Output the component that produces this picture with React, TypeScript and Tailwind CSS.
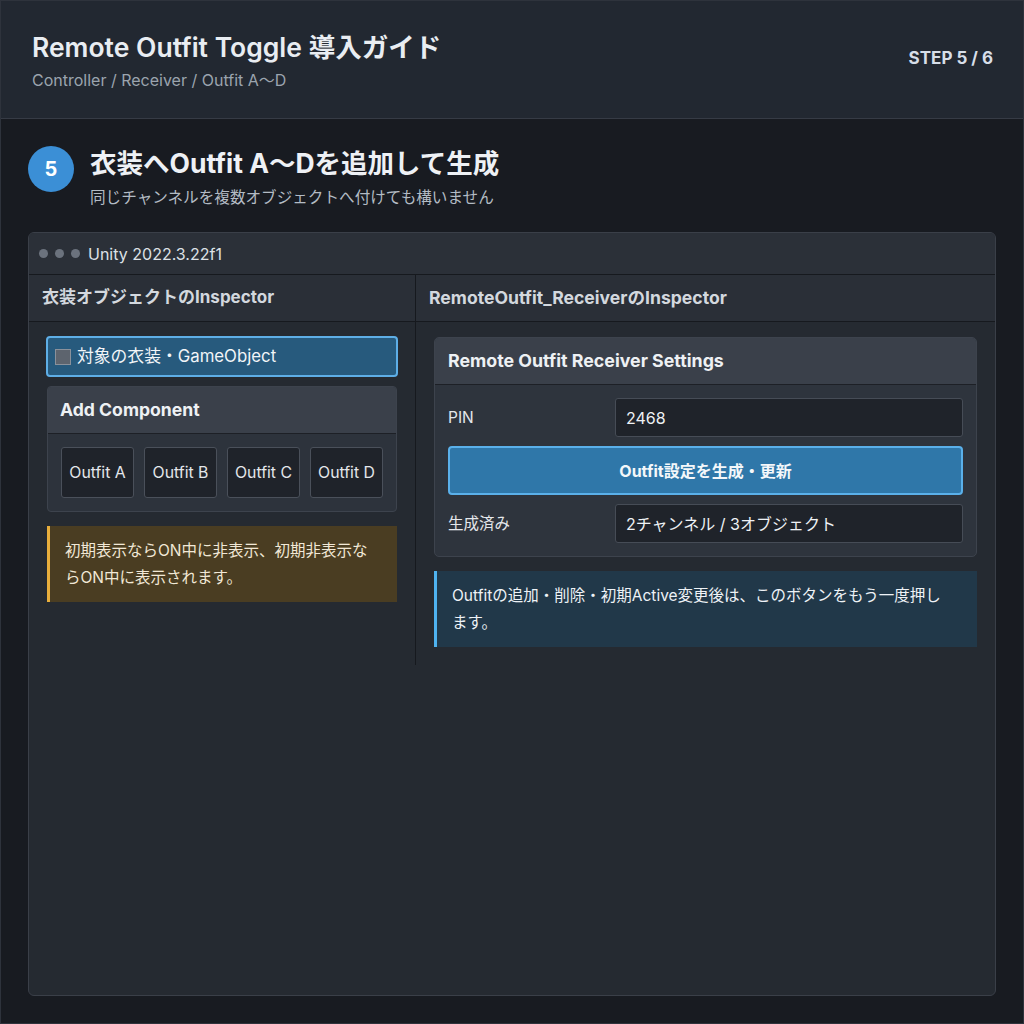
import React from "react";

const font = { fontFamily: '"Inter", "Noto Sans CJK JP", "Noto Sans", sans-serif' };

function OutfitButton({ label }: { label: string }) {
  return (
    <div className="flex h-[51px] w-[73px] items-center justify-center rounded-[3px] border border-[#4a505a] bg-[#1f232a] text-[15.8px] text-[#e4e7eb]">
      {label}
    </div>
  );
}

function FieldRow({ label, value }: { label: string; value: string }) {
  return (
    <div className="flex items-center">
      <div className="w-[167px] text-[15.5px] text-[#e4e7eb]">{label}</div>
      <div className="flex h-[39px] flex-1 items-center rounded-[3px] border border-[#464c56] bg-[#1f232a] px-[10px] text-[16px] text-[#eef1f4]">
        {value}
      </div>
    </div>
  );
}

export default function App() {
  return (
    <div
      className="flex h-[1024px] w-[1024px] flex-col overflow-hidden border border-[#2e333c] bg-[#181b21]"
      style={font}
    >
      {/* page header */}
      <header className="flex h-[118px] shrink-0 items-start justify-between border-b border-[#363b45] bg-[#222831] pl-[31px] pr-[30px] pt-[30px]">
        <div className="flex flex-col">
          <h1 className="text-[26.5px] font-semibold leading-[32px] text-[#e9edf2]">
            Remote Outfit Toggle 導入ガイド
          </h1>
          <p className="mt-[6px] text-[16px] leading-[22px] text-[#9ba4ae]">
            Controller / Receiver / Outfit A〜D
          </p>
        </div>
        <div className="mt-[15px] text-[17px] font-bold leading-[24px] text-[#d7dee8]">STEP 5 / 6</div>
      </header>

      <main className="flex flex-1 flex-col px-[27px] pb-[27px] pt-[27px]">
        {/* step heading */}
        <div className="flex items-start">
          <div className="flex h-[46px] w-[46px] shrink-0 items-center justify-center rounded-full bg-[#3b8fd6] text-[20px] font-bold text-white">
            5
          </div>
          <div className="ml-[16px] flex flex-col">
            <h2 className="text-[26.5px] font-bold leading-[34px] text-[#eef1f5]">
              衣装へOutfit A〜Dを追加して生成
            </h2>
            <p className="mt-[7px] text-[15.6px] leading-[22px] text-[#b3bbc4]">
              同じチャンネルを複数オブジェクトへ付けても構いません
            </p>
          </div>
        </div>

        {/* editor window */}
        <section className="mt-[23px] flex flex-1 flex-col overflow-hidden rounded-[6px] border border-[#3a3f48] bg-[#252a31]">
          <div className="flex h-[42px] shrink-0 items-center border-b border-[#16191e] bg-[#2b3038] px-[10px]">
            <span className="h-[9px] w-[9px] rounded-full bg-[#6b727d]" />
            <span className="ml-[7px] h-[9px] w-[9px] rounded-full bg-[#6b727d]" />
            <span className="ml-[7px] h-[9px] w-[9px] rounded-full bg-[#6b727d]" />
            <span className="ml-[8px] text-[16px] text-[#dde1e6]">Unity 2022.3.22f1</span>
          </div>

          <div className="grid grid-cols-[387px_1fr]">
            {/* left inspector */}
            <div className="flex flex-col border-r border-[#16191e]">
              <div className="flex h-[47px] items-center border-b border-[#16191e] bg-[#2a2f37] px-[13px] text-[17px] font-bold text-[#d3d8de]">
                衣装オブジェクトのInspector
              </div>
              <div className="flex flex-col px-[17px] pb-[16px] pt-[14px]">
                <div className="flex h-[41px] items-center rounded-[4px] border-2 border-[#5eaee6] bg-[#275a7d] px-[7px] text-[16.8px] text-[#f2f5f8]">
                  <span className="h-[16px] w-[16px] border border-[#8a919b] bg-[#5d646e]" />
                  <span className="ml-[6px]">対象の衣装・GameObject</span>
                </div>

                <div className="mx-[1px] mt-[9px] flex flex-col overflow-hidden rounded-[4px] border border-[#3d434d] bg-[#2d333c]">
                  <div className="flex h-[47px] items-center border-b border-[#1d2026] bg-[#3a404a] px-[12px] text-[17.6px] font-bold text-[#eef1f4]">
                    Add Component
                  </div>
                  <div className="flex gap-[10px] px-[13px] pb-[13px] pt-[13px]">
                    <OutfitButton label="Outfit A" />
                    <OutfitButton label="Outfit B" />
                    <OutfitButton label="Outfit C" />
                    <OutfitButton label="Outfit D" />
                  </div>
                </div>

                <div className="mx-[1px] mt-[14px] border-l-[3px] border-[#e8ae3c] bg-[#4a3d22] py-[11px] pl-[15px] pr-[18px] text-[15.5px] leading-[27px] text-[#f1e8d6]">
                  初期表示ならON中に非表示、初期非表示ならON中に表示されます。
                </div>
              </div>
            </div>

            {/* right inspector */}
            <div className="flex flex-col">
              <div className="flex h-[47px] items-center border-b border-[#16191e] bg-[#2a2f37] px-[13px] text-[17.6px] font-bold text-[#d3d8de]">
                RemoteOutfit_ReceiverのInspector
              </div>
              <div className="flex flex-col px-[18px] pb-[18px] pt-[15px]">
                <div className="flex flex-col overflow-hidden rounded-[5px] border border-[#3d434d] bg-[#2e343d]">
                  <div className="flex h-[47px] items-center border-b border-[#1d2026] bg-[#3a404a] px-[13px] text-[17.8px] font-bold text-[#eef1f4]">
                    Remote Outfit Receiver Settings
                  </div>
                  <div className="flex flex-col gap-[9px] px-[13px] pb-[13px] pt-[13px]">
                    <FieldRow label="PIN" value="2468" />
                    <div className="flex h-[49px] items-center justify-center rounded-[4px] border-2 border-[#5ab0ea] bg-[#2f77a9] text-[16px] font-bold text-[#f4f7fa]">
                      Outfit設定を生成・更新
                    </div>
                    <FieldRow label="生成済み" value="2チャンネル / 3オブジェクト" />
                  </div>
                </div>

                <div className="mt-[14px] border-l-[3px] border-[#4fb3f0] bg-[#213849] py-[11px] pl-[15px] pr-[26px] text-[15.5px] leading-[27px] text-[#eef2f6]">
                  Outfitの追加・削除・初期Active変更後は、このボタンをもう一度押します。
                </div>
              </div>
            </div>
          </div>
        </section>
      </main>
    </div>
  );
}
